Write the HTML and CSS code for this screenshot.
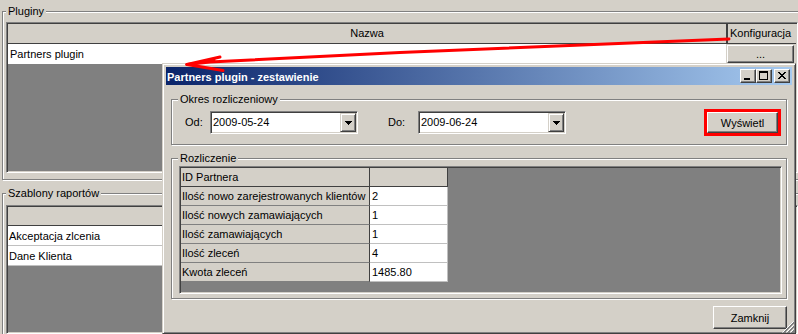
FILE: index.html
```html
<!DOCTYPE html>
<html lang="pl">
<head>
    <meta charset="UTF-8">
    <title>Partners plugin - zestawienie</title>
    <link rel="stylesheet" href="styles.css">
</head>
<body>
    <div class="main">
        <div class="group main-group">
            <div class="group-title main-title">Pluginy</div>
            <div class="list sunken plugins-list">
                <div class="list-head">
                    <div class="col-name head-name">Nazwa</div>
                    <div class="col-config head-config">Konfiguracja</div>
                </div>
                <div class="list-row">
                    <div class="col-name row-name">Partners plugin</div>
                    <div class="col-config row-config"><button class="btn dots-btn">...</button></div>
                </div>
            </div>
        </div>

        <div class="group main-group templates">
            <div class="group-title main-title">Szablony raportów</div>
            <div class="list sunken templates-list">
                <div class="list-head templates-head"></div>
                <div class="template-row">Akceptacja zlcenia</div>
                <div class="template-row">Dane Klienta</div>
            </div>
        </div>
    </div>

    <div class="dialog">
        <div class="titlebar">
            <span class="title">Partners plugin - zestawienie</span>
            <div class="title-buttons">
                <span class="tbtn">
                    <svg width="14" height="12" viewBox="0 0 14 12"><rect x="3" y="8" width="6" height="2" fill="#000"/></svg>
                </span>
                <span class="tbtn">
                    <svg width="14" height="12" viewBox="0 0 14 12"><path d="M2 1h9v9H2zM3 3v6h7V3z" fill="#000" fill-rule="evenodd"/></svg>
                </span>
                <span class="tbtn tbtn-close">
                    <svg width="14" height="12" viewBox="0 0 14 12" shape-rendering="crispEdges">
                        <g fill="#000">
                            <rect x="3" y="2" width="2" height="1"/><rect x="9" y="2" width="2" height="1"/>
                            <rect x="4" y="3" width="2" height="1"/><rect x="8" y="3" width="2" height="1"/>
                            <rect x="5" y="4" width="4" height="1"/>
                            <rect x="6" y="5" width="2" height="1"/>
                            <rect x="5" y="6" width="4" height="1"/>
                            <rect x="4" y="7" width="2" height="1"/><rect x="8" y="7" width="2" height="1"/>
                            <rect x="3" y="8" width="2" height="1"/><rect x="9" y="8" width="2" height="1"/>
                        </g>
                    </svg>
                </span>
            </div>
        </div>

        <div class="dialog-body">
            <div class="group period">
                <div class="group-title">Okres rozliczeniowy</div>
                <div class="period-row">
                    <span class="field-label od-label">Od:</span>
                    <div class="combo sunken">
                        <span class="combo-text">2009-05-24</span>
                        <span class="combo-btn">
                            <svg width="7" height="4" viewBox="0 0 7 4" shape-rendering="crispEdges"><g fill="#000"><rect x="0" y="0" width="7" height="1"/><rect x="1" y="1" width="5" height="1"/><rect x="2" y="2" width="3" height="1"/><rect x="3" y="3" width="1" height="1"/></g></svg>
                        </span>
                    </div>
                    <span class="field-label do-label">Do:</span>
                    <div class="combo sunken">
                        <span class="combo-text">2009-06-24</span>
                        <span class="combo-btn">
                            <svg width="7" height="4" viewBox="0 0 7 4" shape-rendering="crispEdges"><g fill="#000"><rect x="0" y="0" width="7" height="1"/><rect x="1" y="1" width="5" height="1"/><rect x="2" y="2" width="3" height="1"/><rect x="3" y="3" width="1" height="1"/></g></svg>
                        </span>
                    </div>
                    <div class="highlight">
                        <button class="btn show-btn">Wyświetl</button>
                    </div>
                </div>
            </div>

            <div class="group summary">
                <div class="group-title">Rozliczenie</div>
                <div class="grid sunken">
                    <table class="summary-table">
                        <colgroup>
                            <col class="c-name">
                            <col class="c-val">
                        </colgroup>
                        <tr>
                            <th class="corner">ID Partnera</th>
                            <th class="col-head"></th>
                        </tr>
                        <tr><th class="row-head">Ilość nowo zarejestrowanych klientów</th><td>2</td></tr>
                        <tr><th class="row-head">Ilość nowych zamawiających</th><td>1</td></tr>
                        <tr><th class="row-head">Ilość zamawiających</th><td>1</td></tr>
                        <tr><th class="row-head">Ilość zleceń</th><td>4</td></tr>
                        <tr><th class="row-head">Kwota zleceń</th><td>1485.80</td></tr>
                    </table>
                </div>
            </div>

            <div class="footer">
                <button class="btn close-btn">Zamknij</button>
            </div>
        </div>

        <svg class="grip" width="12" height="12" viewBox="0 0 12 12">
            <g stroke-width="1">
                <path d="M11.5 0.5L0.5 11.5M11.5 4.5L4.5 11.5M11.5 8.5L8.5 11.5" stroke="#fff"/>
                <path d="M12 1L1 12M12 2L2 12M12 5L5 12M12 6L6 12M12 9L9 12M12 10L10 12" stroke="#808080"/>
            </g>
        </svg>
    </div>

    <svg class="arrow" width="798" height="334" viewBox="0 0 798 334">
        <g fill="none" stroke="#ff0000" stroke-width="3" stroke-linecap="round" stroke-linejoin="round">
            <path d="M729 39L400 52.5L210 62L187 64.5"/>
            <path d="M187 64.5L220 57"/>
            <path d="M187 64.5L223 70.5"/>
            <path d="M196 63L214 60"/>
        </g>
    </svg>
</body>
</html>
```

FILE: styles.css
```css
* {
    box-sizing: border-box;
}
body {
    margin: 0;
    width: 798px;
    height: 334px;
    overflow: hidden;
    position: relative;
    background: #d4d0c8;
    font-family: "Liberation Sans", Arial, sans-serif;
    font-size: 11px;
    color: #000;
}

/* win classic bits */
.sunken {
    border: 1px solid;
    border-color: #808080 #fff #fff #808080;
    box-shadow: inset 1px 1px 0 #404040, inset -1px -1px 0 #d4d0c8;
    padding: 1px;
}
.btn {
    display: block;
    padding: 0;
    background: #d4d0c8;
    border: 1px solid;
    border-color: #fff #404040 #404040 #fff;
    box-shadow: inset -1px -1px 0 #808080;
    font-family: inherit;
    font-size: 11px;
    color: #000;
    text-align: center;
}
.group {
    border: 1px solid #808080;
    box-shadow: inset 1px 1px 0 #fff, 1px 1px 0 #fff;
}
.group-title {
    width: max-content;
    margin: -7px 0 0 6px;
    padding: 0 2px;
    line-height: 13px;
    background: #d4d0c8;
}

/* main window */
.main {
    padding: 11px 0 0 2px;
}
.main-group {
    width: 820px;
    padding: 0 0 6px 3px;
}
.main-title {
    margin-left: 0;
}
.templates {
    margin-top: 13px;
    padding-bottom: 0;
    border-bottom: 0;
}
.list {
    width: 792px;
    background: #808080;
}
.plugins-list {
    height: 151px;
    margin-top: 4px;
}
.templates-list {
    height: 129px;
    margin-top: 5px;
}
.list-head {
    display: flex;
    height: 20px;
    background: #d4d0c8;
    border-bottom: 1px solid #404040;
}
.templates-head {
    height: 19px;
}
.col-name {
    width: 718px;
}
.col-config {
    width: 70px;
}
.head-name {
    text-align: center;
    line-height: 19px;
}
.head-config {
    border-left: 2px solid #404040;
    padding-left: 2px;
    line-height: 19px;
}
.list-row {
    display: flex;
    height: 20px;
}
.row-name {
    background: #fff;
    line-height: 20px;
    padding-left: 2px;
}
.row-config {
    background: #d4d0c8;
    padding: 1px 0 0 1px;
}
.dots-btn {
    width: 67px;
    height: 18px;
    line-height: 14px;
}
.template-row {
    height: 20px;
    background: #fff;
    border-bottom: 1px solid #c0c0c0;
    line-height: 19px;
    padding: 1px 0 0 1px;
}

/* dialog */
.dialog {
    position: absolute;
    left: 162px;
    top: 63px;
    width: 634px;
    height: 271px;
    padding: 3px;
    background: #d4d0c8;
    border: 1px solid;
    border-color: #d4d0c8 #404040 #404040 #d4d0c8;
    box-shadow: inset 1px 1px 0 #fff, inset -1px -1px 0 #808080;
    display: flex;
    flex-direction: column;
}
.titlebar {
    height: 18px;
    flex: none;
    display: flex;
    align-items: center;
    padding: 0 2px 0 1px;
    background: linear-gradient(to right, #0a246a, #a6caf0);
    color: #fff;
}
.title {
    font-weight: bold;
    line-height: 13px;
    padding-top: 2px;
}
.title-buttons {
    margin-left: auto;
    display: flex;
}
.tbtn {
    width: 16px;
    height: 14px;
    background: #d4d0c8;
    border: 1px solid;
    border-color: #fff #404040 #404040 #fff;
    box-shadow: inset -1px -1px 0 #808080;
}
.tbtn svg {
    display: block;
}
.tbtn-close {
    margin-left: 2px;
}
.dialog-body {
    flex: 1;
    padding: 14px 5px 0 5px;
}
.period {
    padding-bottom: 8px;
}
.period-row {
    display: flex;
    align-items: center;
    margin-top: 3px;
}
.field-label {
    line-height: 13px;
}
.od-label {
    margin-left: 13px;
    width: 25px;
}
.do-label {
    margin-left: 30px;
    width: 30px;
}
.combo {
    width: 148px;
    height: 23px;
    display: flex;
    background: #fff;
}
.combo-text {
    flex: 1;
    line-height: 19px;
    padding-left: 1px;
}
.combo-btn {
    width: 16px;
    display: flex;
    align-items: center;
    justify-content: center;
    background: #d4d0c8;
    border: 1px solid;
    border-color: #d4d0c8 #404040 #404040 #d4d0c8;
    box-shadow: inset 1px 1px 0 #fff, inset -1px -1px 0 #808080;
}
.combo-btn svg {
    display: block;
}
.highlight {
    margin: 0 5px 0 auto;
    border: 3px solid #ff0000;
}
.show-btn {
    width: 71px;
    height: 21px;
}
.summary {
    margin-top: 13px;
    padding-bottom: 4px;
}
.grid {
    height: 128px;
    margin: 1px 4px 0 7px;
    background: #808080;
}
.summary-table {
    table-layout: fixed;
    width: 267px;
    border-collapse: separate;
    border-spacing: 0;
}
.c-name {
    width: 189px;
}
.c-val {
    width: 78px;
}
.summary-table th,
.summary-table td {
    padding: 0 0 0 1px;
    line-height: 18px;
    font-weight: normal;
    text-align: left;
    white-space: nowrap;
    overflow: hidden;
}
.summary-table th {
    background: #d4d0c8;
    border-right: 1px solid #404040;
    border-bottom: 1px solid #808080;
}
.summary-table .corner,
.summary-table .col-head {
    border-bottom-color: #404040;
}
.summary-table td {
    background: #fff;
    padding-left: 2px;
    border-right: 1px solid #c0c0c0;
    border-bottom: 1px solid #c0c0c0;
}
.footer {
    display: flex;
    justify-content: flex-end;
    margin-top: 7px;
}
.close-btn {
    width: 74px;
    height: 23px;
}
.grip {
    position: absolute;
    right: 1px;
    bottom: 0;
}

/* red arrow drawn over the screenshot */
.arrow {
    position: absolute;
    left: 0;
    top: 0;
    pointer-events: none;
}
```
